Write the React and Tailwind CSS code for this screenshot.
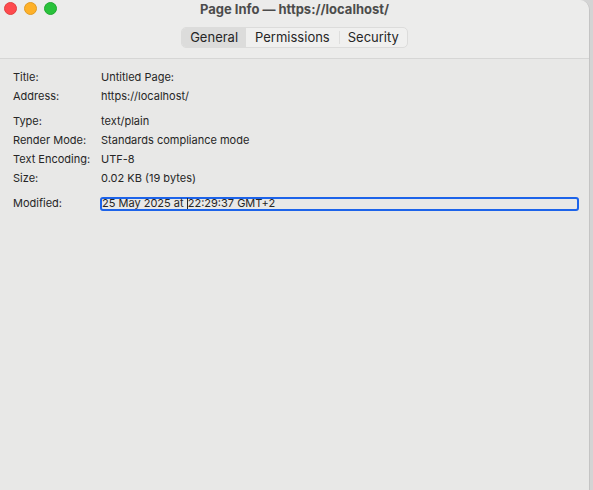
export default function App() {
  const groups = [
    [
      ["Title:", "Untitled Page:"],
      ["Address:", "https://localhost/"],
    ],
    [
      ["Type:", "text/plain"],
      ["Render Mode:", "Standards compliance mode"],
      ["Text Encoding:", "UTF-8"],
      ["Size:", "0.02 KB (19 bytes)"],
    ],
  ];

  return (
    <div
      className="w-[593px] h-[490px] bg-[#d4d4d4] flex"
      style={{ fontFamily: "Inter, 'Noto Sans', sans-serif" }}
    >
      <div className="w-[590px] h-full bg-[#e8e8e7] rounded-tr-[10px] border-r border-[#c4c4c4] flex flex-col overflow-hidden">
        {/* Title bar + toolbar */}
        <div className="h-[59px] bg-[#ececeb] border-b border-[#d6d6d5] flex flex-col">
          <div className="h-[19px] flex items-center relative">
            <div className="absolute left-[4px] top-[2px] flex gap-[7px]">
              <span className="w-[13px] h-[13px] rounded-full bg-[#fe4a4d] border border-[#e2403f]" />
              <span className="w-[13px] h-[13px] rounded-full bg-[#feb128] border border-[#e19b23]" />
              <span className="w-[13px] h-[13px] rounded-full bg-[#29c23b] border border-[#20a830]" />
            </div>
            <p className="w-full text-center text-[13px] font-bold text-[#4c4c4c] pt-[1px]">
              Page Info — https://localhost/
            </p>
          </div>
          <div className="flex justify-center mt-[8px]">
            <div className="flex h-[21px] rounded-[5px] border border-[#dcdcdb] bg-[#f0f0ef] text-[13px] text-[#262626] overflow-hidden">
              <span className="px-[8px] bg-[#dcdcdb] flex items-center">General</span>
              <span className="px-[9px] flex items-center border-r border-[#dededd] my-[3px]">Permissions</span>
              <span className="px-[8px] flex items-center">Security</span>
            </div>
          </div>
        </div>

        {/* Info rows */}
        <div className="pt-[9px] pl-[13px] pr-[10px] text-[11px] text-[#262626]">
          {groups.map((g, gi) => (
            <div key={gi} className="mb-[6px]">
              {g.map(([k, v]) => (
                <div key={k} className="flex h-[19px] items-center">
                  <span className="w-[88px]">{k}</span>
                  <span>{v}</span>
                </div>
              ))}
            </div>
          ))}
          <div className="flex h-[19px] items-center">
            <span className="w-[87px]">Modified:</span>
            <div className="w-[479px] h-[14px] border-2 border-[#1c63ea] rounded-[3px] flex items-center leading-none whitespace-pre">
              <span>25 May 2025 at </span>
              <span className="w-px h-[11px] bg-[#262626]" />
              <span>22:29:37 GMT+2</span>
            </div>
          </div>
        </div>
      </div>
    </div>
  );
}
